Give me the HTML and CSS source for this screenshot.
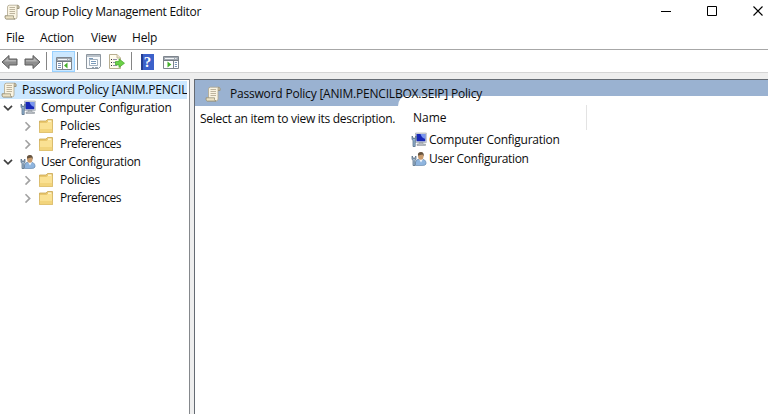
FILE: index.html
```html
<!DOCTYPE html>
<html lang="en">
<head>
<meta charset="utf-8">
<title>Group Policy Management Editor</title>
<link rel="stylesheet" href="styles.css">
</head>
<body>
<svg class="defs" width="0" height="0">
  <symbol id="scroll" viewBox="0 0 16 16">
    <path d="M3.500 3Q3.500 1.200 5.500 1.200H13.500Q15 1.200 15 2.700V4.500H13V13Q13 15 11 15H2.500Q1.200 15 1.200 13.500V11.800H3.500Z" fill="#faf4e2" stroke="#aea68e" stroke-width=".8"/>
    <path d="M13 4.500V2.700Q13 1.200 14 1.200L15 2.700V4.500Z" fill="#c9c0a5" stroke="#8d866f" stroke-width=".6"/>
    <path d="M1.200 11.800H9.500V13.500Q9.800 15 11 15H2.500Q1.200 15 1.200 13.500Z" fill="#ece2c5" stroke="#8d866f" stroke-width=".7"/>
    <path d="M5.500 3.500H11M5.500 5.500H11M5.500 7.500H11M5.500 9.500H11" stroke="#b5ad96" stroke-width=".9"/>
  </symbol>
  <symbol id="computer" viewBox="0 0 16 16">
    <path d="M4.500 1H15.300V10.500H4.500Z" fill="#d9dce0" stroke="#9ba2aa" stroke-width=".6"/>
    <path d="M5.500 2H14.300V9.300H5.500Z" fill="#1728b8"/>
    <path d="M9.500 2H14.300V7Q10.500 6 9.500 2Z" fill="#7895ee"/>
    <path d="M8 10.500H12V12H14.500V13.500H6V12H8Z" fill="#b5bac0" stroke="#858c94" stroke-width=".5"/>
    <path d="M1 4V7Q1 8 2 8.300V14.500H4.200V8.300Q5.200 8 5.200 7V4L4.200 5V6.500H2V5Z" fill="#92b1ce" stroke="#49617b" stroke-width=".7"/>
  </symbol>
  <symbol id="user" viewBox="0 0 16 16">
    <path d="M4.500 14.500V11Q5 8 9.500 8Q14.500 8 15 11.500V13Q14.500 14.500 11 14.500Z" fill="#8fb5df" stroke="#5d7fa5" stroke-width=".6"/>
    <path d="M8 8L10 11.500L12 8Z" fill="#f1f6fb"/>
    <ellipse cx="9.800" cy="5.200" rx="2.700" ry="3.600" fill="#c89b6e"/>
    <path d="M7 4.700Q6.400 1 10 1Q13.400 1.200 12.600 5.500L11.600 3.600Q9 4 7 4.700Z" fill="#65533f"/>
    <path d="M1 5V8Q1.200 9 2 9.300V14.500H4V9.300Q5 9 5 8V5L4 6V7.400H2V6Z" fill="#a4b9cc" stroke="#49617b" stroke-width=".7"/>
  </symbol>
  <symbol id="folder" viewBox="0 0 16 16">
    <path d="M1.500 3H8L9.500 1.500H14.500V14.500H1.500Z" fill="#e9c76e" stroke="#c9a752" stroke-width=".8"/>
    <path d="M10 2.500H13.500V4.500H10Z" fill="#fff8de"/>
    <path d="M1.800 5H8.500L10 3.700H14.200V14.200H1.800Z" fill="#fae193"/>
    <path d="M1.800 11H14.200V14.200H1.800Z" fill="#f2d47c"/>
  </symbol>
  <symbol id="open" viewBox="0 0 10 10"><path d="M1 2.800L5 6.800L9 2.800" fill="none" stroke="#404040" stroke-width="1.700"/></symbol>
  <symbol id="closed" viewBox="0 0 10 10"><path d="M3.500 1.200L7.700 5.400L3.500 9.600" fill="none" stroke="#a2a2a2" stroke-width="1.600"/></symbol>
  <symbol id="arrow" viewBox="0 0 17 16">
    <path d="M1 8L8 1.500V5H16V11H8V14.500Z" fill="#8e8e8e" stroke="#5d5d5d" stroke-linejoin="round"/>
    <path d="M3 7.600L7.200 3.700V6H15V7.600Z" fill="#b4b4b4"/>
  </symbol>
  <symbol id="pane" viewBox="0 0 16 14">
    <path d="M.5 .5H15.500V12.500H.5Z" fill="#fff" stroke="#7e858d"/>
    <path d="M1 1H15V4H1Z" fill="#a2a9b1"/>
    <path d="M2 2.500H11" stroke="#f4f6f8"/><path d="M12 2.500H14" stroke="#e4e8ec" stroke-dasharray="1 .5"/>
    <path d="M1 4.500H15" stroke="#747b83"/>
  </symbol>
</svg>

<header class="titlebar">
  <svg class="icon"><use href="#scroll"/></svg>
  <h1 class="title">Group Policy Management Editor</h1>
  <div class="window-buttons">
    <svg width="12" height="12"><path d="M1 5.500H11" stroke="#000"/></svg>
    <svg width="12" height="12"><path d="M1.500 .5H10.500V9.500H1.500Z" fill="none" stroke="#000"/></svg>
    <svg width="12" height="12"><path d="M1.500 .5L10.500 9.500M10.500 .5L1.500 9.500" stroke="#000" stroke-width="1.100"/></svg>
  </div>
</header>

<nav class="menu">
  <span class="file">File</span><span class="action">Action</span><span class="view">View</span><span class="help">Help</span>
</nav>

<div class="toolbar">
  <svg class="tool back" width="17" height="16"><use href="#arrow"/></svg>
  <svg class="tool forward" width="17" height="16"><use href="#arrow"/></svg>
  <i class="divider"></i>
  <span class="pressed"><svg width="16" height="14"><use href="#pane"/><path d="M6.500 5V12" stroke="#7e858d"/><path d="M2 6.500H5M2 8.500H5M2 10.500H5" stroke="#7892b5"/><path d="M11.500 5.500V11.500L8 8.500Z" fill="#43b02a"/></svg></span>
  <i class="divider near"></i>
  <svg class="tool properties" width="16" height="16">
    <path d="M.5 .5H14.500V12.500L12.500 14.500H.5Z" fill="#f8fafc" stroke="#8d969f"/>
    <path d="M1 2H14" stroke="#bac2ca" stroke-width="2"/>
    <path d="M3.500 5.500H11.500V11.500H3.500Z" fill="#fff" stroke="#a3b0bd"/>
    <path d="M3 4.500H7M5 7.500H10M5 9.500H10" stroke="#7899b9"/><path d="M6 13.500H8M9 13.500H12" stroke="#91a1b0"/>
  </svg>
  <svg class="tool export" width="16" height="16">
    <path d="M.5 .5H8L11.500 4V14.500H.5Z" fill="#fffbed" stroke="#b9af91"/>
    <path d="M8 .5V4H11.500" fill="#eee6cc" stroke="#b9af91" stroke-width=".8"/>
    <path d="M4 5.500H8M4 8.500H7M4 11.500H8" stroke="#9290a9"/><path d="M2 5.500H3M2 8.500H3M2 11.500H3" stroke="#333"/>
    <path d="M6.500 7.500H10V4.800L15.500 9.200L10 13.500V10.900H6.500Z" fill="#6bd146" stroke="#45a628" stroke-width=".7"/>
  </svg>
  <i class="divider last"></i>
  <span class="question">?</span>
  <svg class="tool actions" width="16" height="14"><use href="#pane"/><path d="M10.500 5V12" stroke="#7e858d"/><path d="M11.800 6.500H14M11.800 8.500H14M11.800 10.500H14" stroke="#7892b5"/><path d="M4.500 5.500V11.500L8.300 8.500Z" fill="#43b02a"/></svg>
</div>

<main class="workspace">
  <aside class="tree">
    <div class="node root"><svg class="icon"><use href="#scroll"/></svg><span class="root-label">Password Policy [ANIM.PENCIL</span></div>
    <div class="node"><svg class="chevron"><use href="#open"/></svg><svg class="icon"><use href="#computer"/></svg><span class="computer">Computer Configuration</span></div>
    <div class="node child"><svg class="chevron"><use href="#closed"/></svg><svg class="icon"><use href="#folder"/></svg><span class="policies">Policies</span></div>
    <div class="node child"><svg class="chevron"><use href="#closed"/></svg><svg class="icon"><use href="#folder"/></svg><span class="preferences">Preferences</span></div>
    <div class="node"><svg class="chevron"><use href="#open"/></svg><svg class="icon"><use href="#user"/></svg><span class="user">User Configuration</span></div>
    <div class="node child"><svg class="chevron"><use href="#closed"/></svg><svg class="icon"><use href="#folder"/></svg><span class="policies">Policies</span></div>
    <div class="node child"><svg class="chevron"><use href="#closed"/></svg><svg class="icon"><use href="#folder"/></svg><span class="preferences">Preferences</span></div>
  </aside>
  <div class="splitter"></div>
  <section class="content">
    <div class="band"><svg class="icon"><use href="#scroll"/></svg><span class="band-title">Password Policy [ANIM.PENCILBOX.SEIP] Policy</span></div>
    <div class="columns">
      <p class="description"><span>Select an item to view its description.</span></p>
      <div class="list">
        <div class="list-head"><span class="name">Name</span></div>
        <div class="item"><svg class="icon"><use href="#computer"/></svg><span class="computer">Computer Configuration</span></div>
        <div class="item"><svg class="icon"><use href="#user"/></svg><span class="user">User Configuration</span></div>
      </div>
    </div>
  </section>
</main>
</body>
</html>
```
FILE: styles.css
```css
* { box-sizing: border-box; }
body {
  margin: 0;
  width: 768px;
  height: 414px;
  overflow: hidden;
  display: flex;
  flex-direction: column;
  background: #fff;
  color: #0c0c0c;
  font: 12px/18px "Open Sans", "Noto Sans", sans-serif;
  white-space: nowrap;
}
svg { display: block; flex: none; }
.defs { position: absolute; }
.icon { width: 16px; height: 16px; }
.titlebar { height: 26px; padding: 0 0 2px 4px; display: flex; align-items: center; }
.title { margin: 0 0 0 5px; font-size: 12px; font-weight: 400; letter-spacing: -.29px; }
.window-buttons { margin-left: auto; padding-right: 4px; display: flex; gap: 34px; }
.menu { height: 23px; padding: 3px 0 0 6px; display: flex; }
.menu span { flex: none; letter-spacing: -.2px; }
.menu .file { width: 34px; }
.menu .action { width: 51px; }
.menu .view { width: 41px; }
.toolbar {
  height: 24px;
  border-top: 1px solid #a7a7a7;
  border-bottom: 1px solid #d5d5d5;
  display: flex;
  align-items: center;
}
.back { margin: 2px 0 0 1px; }
.forward { margin: 2px 0 0 6px; transform: scaleX(-1); }
.divider { width: 1px; height: 18px; margin-left: 5px; background: #858585; }
.pressed {
  width: 23px;
  height: 21px;
  margin-left: 5px;
  padding: 5px 3px 0;
  background: #cce8ff;
  border: 1px solid #99d1ff;
}
.divider.near { margin-left: 2px; }
.properties { margin: 2px 0 0 8px; }
.export { margin: 2px 0 0 7px; }
.divider.last { margin-left: 6px; }
.question {
  width: 13px;
  height: 16px;
  margin: 1px 0 0 9px;
  background: linear-gradient(90deg, #243d91 2px, #3c61ca 2px);
  color: #fff;
  font: 700 15px/16px "Liberation Serif", serif;
  text-align: center;
}
.actions { margin: 4px 0 0 9px; }
.workspace {
  flex: 1;
  min-height: 0;
  padding-top: 6px;
  background: #eee;
  display: flex;
}
.tree { width: 189px; padding-top: 1px; background: #fff; border-top: 1px solid #737880; }
.node { height: 18px; display: flex; align-items: center; padding-left: 3px; }
.root { width: 187px; padding-left: 1px; background: #cce8ff; overflow: hidden; }
.root-label { margin-left: 5px; letter-spacing: -.19px; }
.chevron { width: 10px; height: 10px; margin-right: 7px; }
.child { padding-left: 22px; }
.child .chevron { margin-right: 6px; }
.node .computer, .node .user { margin-left: 5px; }
.policies, .preferences { margin-left: 6px; }
.computer { letter-spacing: -.25px; }
.user { letter-spacing: -.34px; }
.policies { letter-spacing: -.2px; }
.preferences { letter-spacing: -.54px; }
.splitter { width: 5px; border-left: 1px solid #85888c; }
.content { flex: 1; background: #fff; border-top: 1px solid #656b73; border-left: 1px solid #656b73; }
.band { height: 16px; padding-left: 10px; background: #9ab2d1; display: flex; align-items: center; }
.band .icon { margin-top: 12px; }
.band-title { margin: 12px 0 0 9px; letter-spacing: -.2px; }
.band .icon, .band-title { position: relative; z-index: 1; }
.columns { display: flex; background: #9ab2d1; }
.description { width: 203px; margin: 0; padding-top: 10px; }
.description span { display: block; height: 308px; padding: 4px 0 0 5px; background: #fff; letter-spacing: -.29px; }
.list { flex: 1; background: #fff; border-top-left-radius: 8px 10px; }
.list-head { width: 189px; height: 34px; padding: 13px 0 0 15px; background: linear-gradient(#e3e3e3, #e3e3e3) right 9px / 1px 25px no-repeat; }
.item { height: 19px; padding-left: 13px; display: flex; align-items: center; }
.item span { margin-left: 2px; }
```
